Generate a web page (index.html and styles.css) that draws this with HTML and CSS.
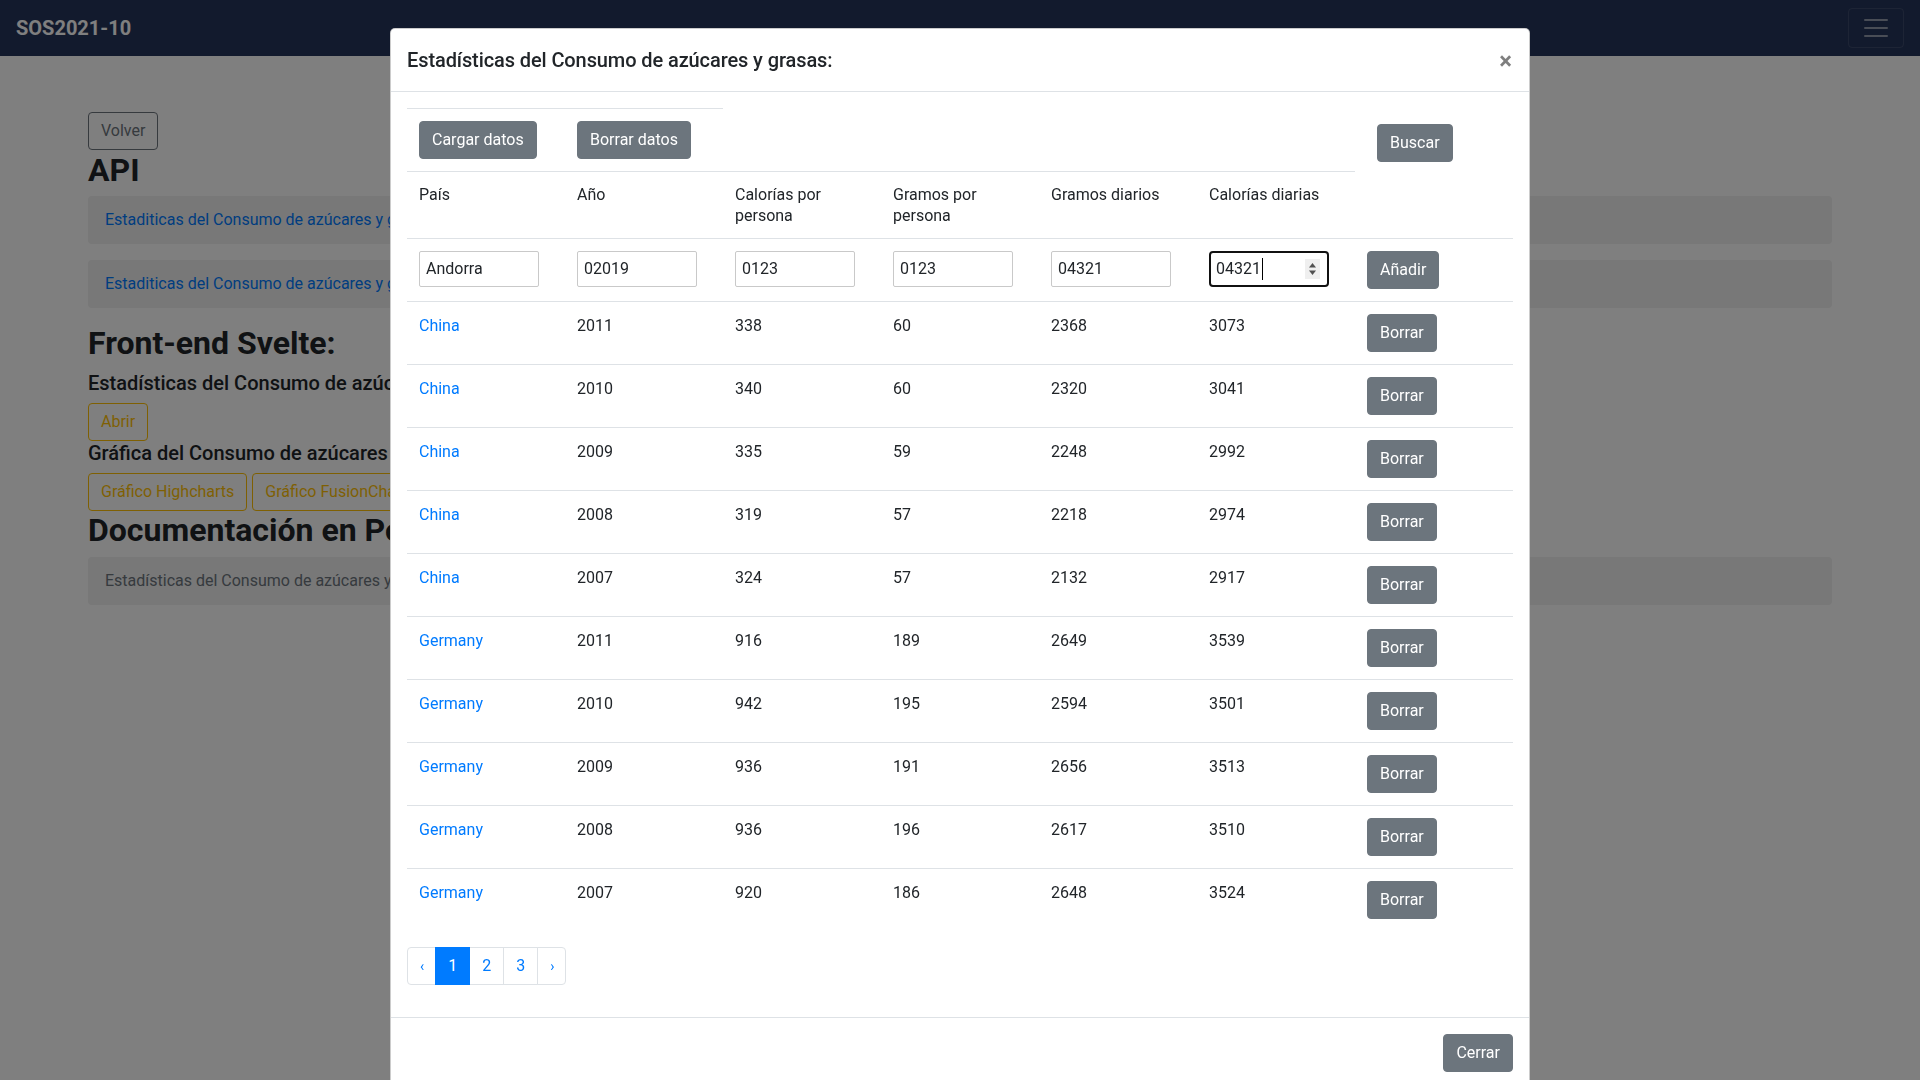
FILE: index.html
```html
<!DOCTYPE html>
<html lang="es">
<head>
<meta charset="utf-8">
<title>SOS2021-10</title>
<link rel="stylesheet" href="styles.css">
</head>
<body>
<nav class="navbar">
  <span class="brand">SOS2021-10</span>
  <button class="toggler" type="button">
    <svg width="30" height="30" viewBox="0 0 30 30"><path d="M4 7h22M4 15h22M4 23h22" stroke="rgba(255,255,255,0.5)" stroke-width="2" stroke-linecap="round"/></svg>
  </button>
</nav>

<main class="page">
  <div class="row-btns"><button class="btn btn-outline-secondary">Volver</button></div>
  <h2 class="h-first">API</h2>
  <div class="well"><a href="#">Estaditicas del Consumo de azúcares y grasas API v1</a></div>
  <div class="well"><a href="#">Estaditicas del Consumo de azúcares y grasas API v2</a></div>
  <h2 class="h-front">Front-end Svelte:</h2>
  <h5>Estadísticas del Consumo de azúcares y grasas</h5>
  <div class="row-btns"><button class="btn btn-outline-warning">Abrir</button></div>
  <h5>Gráfica del Consumo de azúcares y grasas</h5>
  <div class="row-btns gap"><button class="btn btn-outline-warning">Gráfico Highcharts</button><button class="btn btn-outline-warning">Gráfico FusionCharts</button></div>
  <h2>Documentación en Postman:</h2>
  <div class="well muted">Estadísticas del Consumo de azúcares y grasas</div>
</main>

<div class="backdrop"></div>

<div class="modal-wrap">
  <div class="modal-content">
    <div class="modal-header">
      <h5 class="modal-title">Estadísticas del Consumo de azúcares y grasas:</h5>
      <button class="close" type="button">×</button>
    </div>
    <div class="modal-body">
      <table class="table">
        <colgroup><col><col><col><col><col><col><col></colgroup>
        <tbody>
          <tr class="tool">
            <td class="bt"><button class="btn btn-secondary">Cargar datos</button></td>
            <td class="bt"><button class="btn btn-secondary">Borrar datos</button></td>
            <td></td><td></td><td></td><td></td>
            <td rowspan="2" class="buscar"><button class="btn btn-secondary">Buscar</button></td>
          </tr>
          <tr class="head">
            <th>País</th>
            <th>Año</th>
            <th>Calorías por persona</th>
            <th>Gramos por persona</th>
            <th>Gramos diarios</th>
            <th>Calorías diarias</th>
          </tr>
          <tr class="bt-row">
            <td><span class="inp">Andorra</span></td>
            <td><span class="inp">02019</span></td>
            <td><span class="inp">0123</span></td>
            <td><span class="inp">0123</span></td>
            <td><span class="inp">04321</span></td>
            <td><span class="inp focus">04321<span class="caret"></span><span class="spin"><svg width="9" height="14" viewBox="0 0 9 14"><path d="M4.5 1L8 5.5H1z" fill="#505050"/><path d="M4.5 13L8 8.5H1z" fill="#505050"/></svg></span></span></td>
            <td><button class="btn btn-secondary">Añadir</button></td>
          </tr>
          <tr class="bt-row"><td><a href="#">China</a></td><td>2011</td><td>338</td><td>60</td><td>2368</td><td>3073</td><td><button class="btn btn-secondary">Borrar</button></td></tr>
          <tr class="bt-row"><td><a href="#">China</a></td><td>2010</td><td>340</td><td>60</td><td>2320</td><td>3041</td><td><button class="btn btn-secondary">Borrar</button></td></tr>
          <tr class="bt-row"><td><a href="#">China</a></td><td>2009</td><td>335</td><td>59</td><td>2248</td><td>2992</td><td><button class="btn btn-secondary">Borrar</button></td></tr>
          <tr class="bt-row"><td><a href="#">China</a></td><td>2008</td><td>319</td><td>57</td><td>2218</td><td>2974</td><td><button class="btn btn-secondary">Borrar</button></td></tr>
          <tr class="bt-row"><td><a href="#">China</a></td><td>2007</td><td>324</td><td>57</td><td>2132</td><td>2917</td><td><button class="btn btn-secondary">Borrar</button></td></tr>
          <tr class="bt-row"><td><a href="#">Germany</a></td><td>2011</td><td>916</td><td>189</td><td>2649</td><td>3539</td><td><button class="btn btn-secondary">Borrar</button></td></tr>
          <tr class="bt-row"><td><a href="#">Germany</a></td><td>2010</td><td>942</td><td>195</td><td>2594</td><td>3501</td><td><button class="btn btn-secondary">Borrar</button></td></tr>
          <tr class="bt-row"><td><a href="#">Germany</a></td><td>2009</td><td>936</td><td>191</td><td>2656</td><td>3513</td><td><button class="btn btn-secondary">Borrar</button></td></tr>
          <tr class="bt-row"><td><a href="#">Germany</a></td><td>2008</td><td>936</td><td>196</td><td>2617</td><td>3510</td><td><button class="btn btn-secondary">Borrar</button></td></tr>
          <tr class="bt-row"><td><a href="#">Germany</a></td><td>2007</td><td>920</td><td>186</td><td>2648</td><td>3524</td><td><button class="btn btn-secondary">Borrar</button></td></tr>
        </tbody>
      </table>
      <ul class="pagination">
        <li class="page-item"><a class="page-link arrow" href="#">‹</a></li>
        <li class="page-item active"><a class="page-link" href="#">1</a></li>
        <li class="page-item"><a class="page-link" href="#">2</a></li>
        <li class="page-item"><a class="page-link" href="#">3</a></li>
        <li class="page-item"><a class="page-link arrow" href="#">›</a></li>
      </ul>
    </div>
    <div class="modal-footer">
      <button class="btn btn-secondary">Cerrar</button>
    </div>
  </div>
</div>
</body>
</html>
```
FILE: styles.css
```css
* { box-sizing: border-box; }

html, body {
  margin: 0;
  height: 1080px;
  overflow: hidden;
}

body {
  font-family: Roboto, "Liberation Sans", Arial, sans-serif;
  font-size: 16px;
  line-height: 1.5;
  color: #212529;
  background: #fff;
}

a { color: #007bff; text-decoration: none; }

/* navbar */
.navbar {
  display: flex;
  justify-content: space-between;
  align-items: center;
  padding: 8px 16px;
  background: #25355b;
}
.brand {
  color: #fff;
  font-size: 20px;
  font-weight: 700;
  line-height: 30px;
  padding: 5px 0;
}
.toggler {
  display: flex;
  padding: 4px 12px;
  background: transparent;
  border: 1px solid rgba(255,255,255,0.1);
  border-radius: 4px;
}

/* page behind the modal */
.page {
  padding: 56px 88px 0;
  white-space: nowrap;
}
.row-btns { display: flex; }
.row-btns.gap { gap: 5px; margin-top: 1px; }
.page h2 {
  font-size: 32px;
  font-weight: 700;
  line-height: 38px;
  margin: 0 0 8px;
}
.page h2.h-first { margin-top: 1px; margin-bottom: 7px; }
.page h2.h-front { margin-top: 3px; margin-bottom: 9px; }
.page h5 {
  font-size: 20px;
  font-weight: 500;
  line-height: 24px;
  margin: 0 0 8px;
}
.well {
  background: #f0f0f0;
  border-radius: 4px;
  padding: 12px 17px;
  margin-bottom: 16px;
}
.well.muted { color: #6c757d; }

.btn {
  display: inline-block;
  font-family: inherit;
  font-size: 16px;
  line-height: 24px;
  padding: 6px 12px;
  border: 1px solid transparent;
  border-radius: 4px;
  background: transparent;
  white-space: nowrap;
}
.btn-outline-secondary { color: #6c757d; border-color: #6c757d; }
.btn-outline-warning { color: #ffc107; border-color: #ffc107; }
.btn-secondary { color: #fff; background: #6c757d; border-color: #6c757d; }

.backdrop {
  position: fixed;
  inset: 0;
  background: rgba(0,0,0,0.5);
}

/* modal */
.modal-wrap {
  position: fixed;
  inset: 0;
  display: flex;
  justify-content: center;
  align-items: flex-start;
  padding-top: 28px;
  overflow: hidden;
}
.modal-content {
  width: 1140px;
  background: #fff;
  border: 1px solid rgba(0,0,0,0.2);
  border-radius: 5px;
}
.modal-header {
  display: flex;
  align-items: flex-start;
  padding: 16px;
  border-bottom: 1px solid #dee2e6;
}
.modal-title {
  margin: 0;
  font-size: 20px;
  font-weight: 500;
  line-height: 30px;
  letter-spacing: -0.1px;
}
.close {
  margin: -16px -15px -16px auto;
  padding: 18px 16px 14px;
  background: transparent;
  border: 0;
  font-family: inherit;
  font-size: 24px;
  font-weight: 700;
  line-height: 28px;
  color: #000;
  opacity: 0.5;
}
.modal-body { padding: 16px; }

.table {
  width: 100%;
  table-layout: fixed;
  border-collapse: separate;
  border-spacing: 0;
  margin-bottom: 16px;
}
.table td, .table th {
  padding: 12px;
  vertical-align: top;
  text-align: left;
  font-weight: 400;
}
.table .tool td { border-top: 0; }
.table .tool td.bt { border-top: 1px solid #dee2e6; }
.table td.buscar { padding: 16px 12px 12px 22px; }
.table .head th {
  border-top: 1px solid #dee2e6;
  line-height: 21px;
}
.table .bt-row td { border-top: 1px solid #dee2e6; }

.inp {
  display: flex;
  align-items: center;
  width: 120px;
  height: 36px;
  padding: 0 6px;
  border: 1px solid #c9c9c9;
  border-radius: 2px;
  color: #212529;
}
.inp.focus {
  border: 2px solid #111;
  border-radius: 4px;
  padding: 0 5px;
}
.caret {
  width: 1px;
  height: 22px;
  background: #000;
  margin-left: 1px;
}
.spin {
  margin-left: auto;
  width: 15px;
  height: 20px;
  background: #efefef;
  display: flex;
  align-items: center;
  justify-content: center;
  margin-right: 2px;
}

.pagination {
  display: flex;
  list-style: none;
  margin: 0 0 16px;
  padding: 0;
}
.page-link {
  display: block;
  padding: 7px 12px;
  line-height: 22px;
  border: 1px solid #dee2e6;
  margin-left: -1px;
  color: #007bff;
  background: #fff;
}
.page-item:first-child .page-link { margin-left: 0; border-radius: 4px 0 0 4px; }
.page-item:last-child .page-link { border-radius: 0 4px 4px 0; }
.page-item.active .page-link { background: #007bff; border-color: #007bff; color: #fff; position: relative; }
.page-link.arrow { font-size: 14px; padding: 7px 11px 7px 12px; }

.modal-footer {
  display: flex;
  justify-content: flex-end;
  padding: 12px;
  border-top: 1px solid #dee2e6;
}
.modal-footer .btn { margin: 4px; }
```
